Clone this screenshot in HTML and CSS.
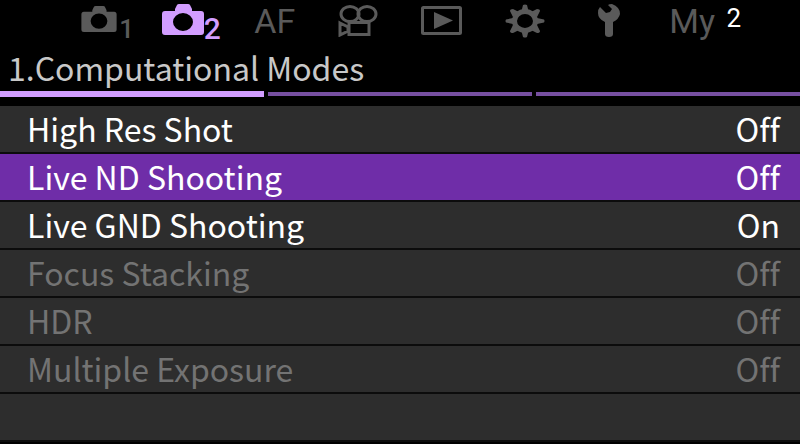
FILE: index.html
```html
<!DOCTYPE html>
<html lang="en">
<head>
  <meta charset="UTF-8">
  <meta name="viewport" content="width=device-width, initial-scale=1.0">
  <title>Camera Menu</title>
  <link rel="stylesheet" href="styles.css">
</head>
<body>
  <nav class="tabs">
    <button class="tab camera" aria-label="Shooting menu 1">
      <svg width="36" height="26" viewBox="0 0 42 31">
        <path fill-rule="evenodd" d="M13 5 15 1Q15.500 0 17 0H26Q27.500 0 28 1L30 5V7H39Q42 7 42 10V28Q42 31 39 31H3Q0 31 0 28V10Q0 7 3 7H13ZM21 9A10 9 0 1 0 21 27A10 9 0 1 0 21 9Z"/>
      </svg>
      <span class="number">1</span>
    </button>
    <button class="tab camera active" aria-label="Shooting menu 2">
      <svg width="42" height="31" viewBox="0 0 42 31">
        <path fill-rule="evenodd" d="M13 5 15 1Q15.500 0 17 0H26Q27.500 0 28 1L30 5V7H39Q42 7 42 10V28Q42 31 39 31H3Q0 31 0 28V10Q0 7 3 7H13ZM21 9A10 9 0 1 0 21 27A10 9 0 1 0 21 9Z"/>
      </svg>
      <span class="number">2</span>
    </button>
    <button class="tab">AF</button>
    <button class="tab" aria-label="Video menu">
      <svg class="line" width="40" height="32" viewBox="0 0 40 32">
        <ellipse cx="12" cy="9" rx="9" ry="7.500"/>
        <ellipse cx="29" cy="9" rx="9" ry="7.500"/>
        <path d="M11 17.500H31V29.500H11ZM2 18 10 22V26L2 30Z"/>
      </svg>
    </button>
    <button class="tab" aria-label="Playback menu">
      <svg width="42" height="30" viewBox="0 0 42 30">
        <rect class="line" x="1.500" y="1.500" width="38" height="26" rx="1"/>
        <path d="M13 6V23L32 14.500Z"/>
      </svg>
    </button>
    <button class="tab" aria-label="Custom menu">
      <svg width="40" height="34" viewBox="0 0 40 34">
        <ellipse cx="20" cy="17" rx="10.500" ry="9.500" fill="none" stroke="currentColor" stroke-width="5"/>
        <path d="M16.500 7 18 1Q20 0 22 1L23.500 7ZM16.500 27 18 33Q20 34 22 33L23.500 27ZM8 14 1 15.500Q0 17 1 18.500L8 20ZM32 14 39 15.500Q40 17 39 18.500L32 20ZM8 13 5 7Q5 5 8 5L14 8ZM32 13 35 7Q35 5 32 5L26 8ZM8 21 5 27Q5 29 8 29L14 26ZM32 21 35 27Q35 29 32 29L26 26Z"/>
      </svg>
    </button>
    <button class="tab" aria-label="Setup menu">
      <svg width="22" height="34" viewBox="0 0 22 34">
        <path d="M2 3 8 9 12 8 14 5 10 1Q11 0 14 0Q22 3 22 10Q21 15 15 18V30Q15 33 11 33Q7 33 7 30V18Q0 15 0 9Q0 5 2 3Z"/>
      </svg>
    </button>
    <button class="tab">My</button>
    <span class="page">2</span>
  </nav>

  <main>
    <h1>1.Computational Modes</h1>
    <div class="pages">
      <span class="current"></span>
      <span></span>
      <span></span>
    </div>

    <div class="menu">
      <button class="item"><span>High Res Shot</span><span>Off</span></button>
      <button class="item selected"><span>Live ND Shooting</span><span>Off</span></button>
      <button class="item"><span>Live GND Shooting</span><span>On</span></button>
      <button class="item" disabled><span>Focus Stacking</span><span>Off</span></button>
      <button class="item" disabled><span>HDR</span><span>Off</span></button>
      <button class="item" disabled><span>Multiple Exposure</span><span>Off</span></button>
      <div class="item"></div>
    </div>
  </main>
</body>
</html>
```
FILE: styles.css
```css
* {
  box-sizing: border-box;
}
body {
  margin: 0;
  background-color: #000;
  color: #fff;
  font-family: 'Noto Sans CJK JP', 'Noto Sans', sans-serif;
  font-variant-ligatures: none;
}
button {
  border: none;
  padding: 0;
  background: none;
  font-family: inherit;
  font-variant-ligatures: inherit;
  cursor: pointer;
}
.tabs {
  position: relative;
  display: flex;
  height: 44px;
  padding: 0 66px;
  font-family: Roboto, sans-serif;
}
.tab {
  flex: 1;
  display: flex;
  align-items: center;
  justify-content: center;
  padding-bottom: 2px;
  color: #5a5a5a;
  font-size: 34px;
  line-height: 42px;
}
.tab svg {
  fill: currentColor;
}
.tab .line {
  fill: none;
  stroke: currentColor;
  stroke-width: 3;
}
.camera {
  gap: 2px;
}
.camera svg {
  margin-bottom: 4px;
}
.tab.active {
  gap: 0;
  color: #d29dff;
}
.number {
  align-self: flex-end;
  font-size: 26px;
  font-weight: 500;
  line-height: 26px;
}
.active .number {
  font-size: 30px;
}
.page {
  position: absolute;
  top: 0;
  right: 59px;
  font-size: 26px;
  line-height: 36px;
}
h1 {
  margin: 0;
  padding: 0 8px;
  color: #c8c8c8;
  font-size: 32px;
  font-weight: 400;
  line-height: 47px;
}
.pages {
  display: flex;
  align-items: center;
  gap: 4px;
  height: 5px;
  margin-bottom: 10px;
}
.pages span {
  flex: 1;
  height: 4px;
  background-color: #764fa0;
}
.pages .current {
  height: 6px;
  background-color: #d29dff;
}
.item {
  display: flex;
  align-items: center;
  justify-content: space-between;
  width: 100%;
  height: 48px;
  padding: 0 20px 2px 27px;
  border-bottom: 2px solid #0c0c0c;
  background-color: #2d2d2d;
  color: #fff;
  font-size: 32px;
  line-height: 44px;
}
.item.selected {
  background-color: #6f2da8;
}
.item:disabled {
  color: #737373;
}
```
